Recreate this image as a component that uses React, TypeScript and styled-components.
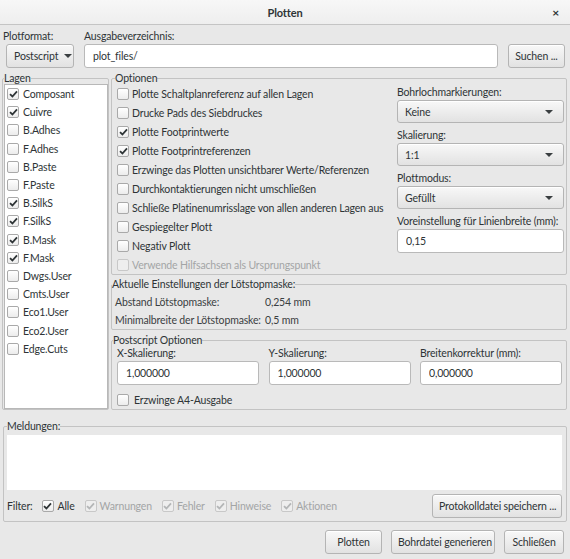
import React from 'react';
import styled, { createGlobalStyle } from 'styled-components';

const GlobalStyle = createGlobalStyle`
  html, body { margin: 0; padding: 0; background: #e8e8e8; }
  body {
    font-family: Lato, "Noto Sans", sans-serif;
    font-size: 10.5px;
    letter-spacing: -0.15px;
    color: #2e3436;
  }
  * { box-sizing: border-box; }
`;

const Window = styled.div`
  width: 570px;
  height: 559px;
  display: flex;
  flex-direction: column;
  background: #e8e8e8;
  overflow: hidden;
`;

const TitleBar = styled.div`
  height: 25px;
  flex: none;
  display: grid;
  grid-template-columns: 1fr auto 1fr;
  align-items: center;
  background: linear-gradient(#f7f7f7, #eeeeee);
  border-bottom: 1px solid #c4c4c4;
`;

const Title = styled.div`
  grid-column: 2;
  font-weight: 700;
  font-size: 11px;
  color: #2e3436;
`;

const Close = styled.div`
  justify-self: end;
  margin-right: 11px;
  font-weight: 700;
  font-size: 12px;
  color: #2e3436;
`;

const Body = styled.div`
  display: flex;
  flex-direction: column;
  padding: 0 3px 0 2px;
`;

const TopRow = styled.div`
  display: flex;
  align-items: flex-end;
  margin-top: 3px;
`;

const FieldCol = styled.div<{ $grow?: boolean; $w?: number; $ml?: number }>`
  display: flex;
  flex-direction: column;
  ${(p) => (p.$grow ? 'flex: 1;' : '')}
  ${(p) => (p.$w ? `width: ${p.$w}px;` : '')}
  margin-left: ${(p) => p.$ml ?? 0}px;
`;

const Label = styled.div<{ $ml?: number; $lh?: number }>`
  line-height: ${(p) => p.$lh ?? 16}px;
  margin-left: ${(p) => p.$ml ?? 0}px;
  white-space: nowrap;
`;

const Button = styled.button<{ $w?: number }>`
  height: 24px;
  ${(p) => (p.$w ? `width: ${p.$w}px;` : '')}
  padding: 0 6px;
  border: 1px solid #b4b4b4;
  border-radius: 3px;
  background: linear-gradient(#f8f8f8, #e2e2e2);
  box-shadow: inset 0 1px #ffffff;
  font: inherit;
  letter-spacing: inherit;
  color: #2e3436;
  white-space: nowrap;
`;

const Combo = styled(Button)<{ $h?: number; $spread?: boolean }>`
  display: flex;
  align-items: center;
  justify-content: ${(p) => (p.$spread ? 'space-between' : 'flex-start')};
  gap: 6px;
  height: ${(p) => p.$h ?? 24}px;
  padding: 0 10px 0 7px;
`;

const Arrow = styled.span`
  flex: none;
  width: 0;
  height: 0;
  border-left: 4px solid transparent;
  border-right: 4px solid transparent;
  border-top: 4px solid #3a3f41;
`;

const TextInput = styled.input<{ $w?: number }>`
  height: 24px;
  ${(p) => (p.$w ? `width: ${p.$w}px;` : 'width: 100%;')}
  border: 1px solid #b9b9b9;
  border-radius: 3px;
  background: #ffffff;
  padding: 0 8px;
  font: inherit;
  letter-spacing: inherit;
  color: #2e3436;
  outline: none;
`;

const MainRow = styled.div`
  display: flex;
  align-items: stretch;
  gap: 2px;
  margin-top: 4px;
`;

const Group = styled.fieldset<{ $pad?: string; $w?: number; $mt?: number }>`
  margin: ${(p) => p.$mt ?? 0}px 0 0 0;
  min-width: 0;
  border: 1px solid #c3c3c3;
  border-radius: 2px;
  padding: ${(p) => p.$pad ?? '0'};
  ${(p) => (p.$w ? `width: ${p.$w}px; flex: none;` : '')}
  display: flex;
  flex-direction: column;
`;

const Legend = styled.legend<{ $ml?: number }>`
  padding: 0;
  margin-left: ${(p) => p.$ml ?? 0}px;
  line-height: 12px;
  color: #2e3436;
  white-space: nowrap;
`;

const LayerList = styled.div`
  flex: 1;
  background: #ffffff;
  border: 1px solid #b8b8b8;
  padding: 0 0 0 2px;
`;

const Row = styled.label<{ $h: number; $disabled?: boolean; $gap?: number }>`
  display: flex;
  align-items: center;
  gap: ${(p) => p.$gap ?? 4}px;
  height: ${(p) => p.$h}px;
  white-space: nowrap;
  color: ${(p) => (p.$disabled ? '#a3a5a6' : '#2e3436')};
`;

const Box = styled.span<{ $disabled?: boolean }>`
  flex: none;
  width: 12px;
  height: 12px;
  border: 1px solid ${(p) => (p.$disabled ? '#c8c8c8' : '#a9a9a9')};
  border-radius: 2px;
  background: ${(p) => (p.$disabled ? '#eeeeee' : 'linear-gradient(#ffffff, #ececec)')};
  display: flex;
  align-items: center;
  justify-content: center;
`;

const RightCol = styled.div`
  display: flex;
  flex-direction: column;
  flex: 1;
  min-width: 0;
`;

const OptionsBody = styled.div`
  display: flex;
  flex: 1;
`;

const OptionsList = styled.div`
  flex: 1;
  min-width: 0;
  display: flex;
  flex-direction: column;
`;

const SideFields = styled.div`
  width: 167px;
  flex: none;
  display: flex;
  flex-direction: column;
`;

const SideLabel = styled.div<{ $first?: boolean }>`
  line-height: 16px;
  margin-top: ${(p) => (p.$first ? 0 : 4)}px;
  white-space: nowrap;
`;

const MaskGrid = styled.div`
  display: grid;
  grid-template-columns: 150px 1fr;
  grid-auto-rows: 18px;
  align-items: center;
  white-space: nowrap;
  color: #3b4042;
`;

const PsGrid = styled.div`
  display: grid;
  grid-template-columns: repeat(3, 142px);
  column-gap: 9.5px;
`;

const PsField = styled.div`
  display: flex;
  flex-direction: column;
  gap: 1px;
`;

const MessageArea = styled.div`
  height: 55px;
  margin-top: 3px;
  background: #ffffff;
`;

const FilterRow = styled.div`
  display: flex;
  align-items: center;
  gap: 9px;
  margin-top: 4px;
  height: 24px;
`;

const FilterItems = styled.div`
  display: flex;
  align-items: center;
  gap: 10px;
`;

const Spacer = styled.div`
  flex: 1;
`;

const Footer = styled.div`
  display: flex;
  justify-content: flex-end;
  gap: 9px;
  margin-top: 8px;
  padding-right: 3px;
`;

const Check: React.FC<{ checked?: boolean; disabled?: boolean }> = ({ checked, disabled }) => (
  <Box $disabled={disabled}>
    {checked && (
      <svg width="9" height="8" viewBox="0 0 9 8">
        <path
          d="M1 4.2 L3.4 6.5 L8 1.3"
          fill="none"
          stroke={disabled ? '#b4b6b7' : '#2e3436'}
          strokeWidth="1.8"
        />
      </svg>
    )}
  </Box>
);

const layers: [string, boolean][] = [
  ['Composant', true],
  ['Cuivre', true],
  ['B.Adhes', false],
  ['F.Adhes', false],
  ['B.Paste', false],
  ['F.Paste', false],
  ['B.SilkS', true],
  ['F.SilkS', true],
  ['B.Mask', true],
  ['F.Mask', true],
  ['Dwgs.User', false],
  ['Cmts.User', false],
  ['Eco1.User', false],
  ['Eco2.User', false],
  ['Edge.Cuts', false],
];

const options: [string, boolean, boolean][] = [
  ['Plotte Schaltplanreferenz auf allen Lagen', false, false],
  ['Drucke Pads des Siebdruckes', false, false],
  ['Plotte Footprintwerte', true, false],
  ['Plotte Footprintreferenzen', true, false],
  ['Erzwinge das Plotten unsichtbarer Werte/Referenzen', false, false],
  ['Durchkontaktierungen nicht umschließen', false, false],
  ['Schließe Platinenumrisslage von allen anderen Lagen aus', false, false],
  ['Gespiegelter Plott', false, false],
  ['Negativ Plott', false, false],
  ['Verwende Hilfsachsen als Ursprungspunkt', false, true],
];

const filters: [string, boolean][] = [
  ['Warnungen', true],
  ['Fehler', true],
  ['Hinweise', true],
  ['Aktionen', true],
];

export default function App() {
  return (
    <>
      <GlobalStyle />
      <Window>
        <TitleBar>
          <Title>Plotten</Title>
          <Close>×</Close>
        </TitleBar>
        <Body>
          <TopRow>
            <FieldCol $w={72} $ml={1}>
              <Label>Plotformat:</Label>
              <Combo $w={68} style={{ marginLeft: 3 }}>
                Postscript <Arrow />
              </Combo>
            </FieldCol>
            <FieldCol $grow $ml={9}>
              <Label>Ausgabeverzeichnis:</Label>
              <TextInput defaultValue="plot_files/" readOnly />
            </FieldCol>
            <Button $w={57} style={{ marginLeft: 10, marginRight: 2 }}>
              Suchen ...
            </Button>
          </TopRow>

          <MainRow>
            <Group $w={107} $pad="0 0 0 1px">
              <Legend>Lagen</Legend>
              <LayerList>
                {layers.map(([name, on]) => (
                  <Row key={name} $h={18.2} $gap={4}>
                    <Check checked={on} />
                    {name}
                  </Row>
                ))}
              </LayerList>
            </Group>

            <RightCol>
              <Group $pad="0 2px 0 5px">
                <Legend $ml={-2}>Optionen</Legend>
                <OptionsBody>
                  <OptionsList>
                    {options.map(([text, on, dis]) => (
                      <Row key={text} $h={19} $gap={3} $disabled={dis}>
                        <Check checked={on} disabled={dis} />
                        {text}
                      </Row>
                    ))}
                  </OptionsList>
                  <SideFields>
                    <SideLabel $first>Bohrlochmarkierungen:</SideLabel>
                    <Combo $spread $h={23}>
                      Keine <Arrow />
                    </Combo>
                    <SideLabel>Skalierung:</SideLabel>
                    <Combo $spread $h={23}>
                      1:1 <Arrow />
                    </Combo>
                    <SideLabel>Plottmodus:</SideLabel>
                    <Combo $spread $h={23}>
                      Gefüllt <Arrow />
                    </Combo>
                    <SideLabel>Voreinstellung für Linienbreite (mm):</SideLabel>
                    <TextInput defaultValue="0,15" readOnly />
                  </SideFields>
                </OptionsBody>
              </Group>

              <Group $mt={3} $pad="3px 2px 0 3px">
                <Legend $ml={-3}>Aktuelle Einstellungen der Lötstopmaske:</Legend>
                <MaskGrid>
                  <span>Abstand Lötstopmaske:</span>
                  <span>0,254 mm</span>
                  <span>Minimalbreite der Lötstopmaske:</span>
                  <span>0,5 mm</span>
                </MaskGrid>
              </Group>

              <Group $mt={4} $pad="0 2px 0 5px">
                <Legend $ml={-4}>Postscript Optionen</Legend>
                <PsGrid>
                  <PsField>
                    <Label $lh={14}>X-Skalierung:</Label>
                    <TextInput defaultValue="1,000000" readOnly />
                  </PsField>
                  <PsField>
                    <Label $lh={14}>Y-Skalierung:</Label>
                    <TextInput defaultValue="1,000000" readOnly />
                  </PsField>
                  <PsField>
                    <Label $lh={14}>Breitenkorrektur (mm):</Label>
                    <TextInput defaultValue="0,000000" readOnly />
                  </PsField>
                </PsGrid>
                <Row $h={18} $gap={5} style={{ marginTop: 6 }}>
                  <Check />
                  Erzwinge A4-Ausgabe
                </Row>
              </Group>
            </RightCol>
          </MainRow>

          <Group $mt={10} $pad="0 4px 3px 3px" style={{ marginLeft: 1 }}>
            <Legend $ml={0}>Meldungen:</Legend>
            <MessageArea />
            <FilterRow>
              <span>Filter:</span>
              <FilterItems>
                <Row $h={24} $gap={4}>
                  <Check checked />
                  Alle
                </Row>
                {filters.map(([t, on]) => (
                  <Row key={t} $h={24} $gap={3} $disabled>
                    <Check checked={on} disabled />
                    {t}
                  </Row>
                ))}
              </FilterItems>
              <Spacer />
              <Button $w={130}>Protokolldatei speichern ...</Button>
            </FilterRow>
          </Group>

          <Footer>
            <Button $w={57}>Plotten</Button>
            <Button $w={104}>Bohrdatei generieren</Button>
            <Button $w={60}>Schließen</Button>
          </Footer>
        </Body>
      </Window>
    </>
  );
}
